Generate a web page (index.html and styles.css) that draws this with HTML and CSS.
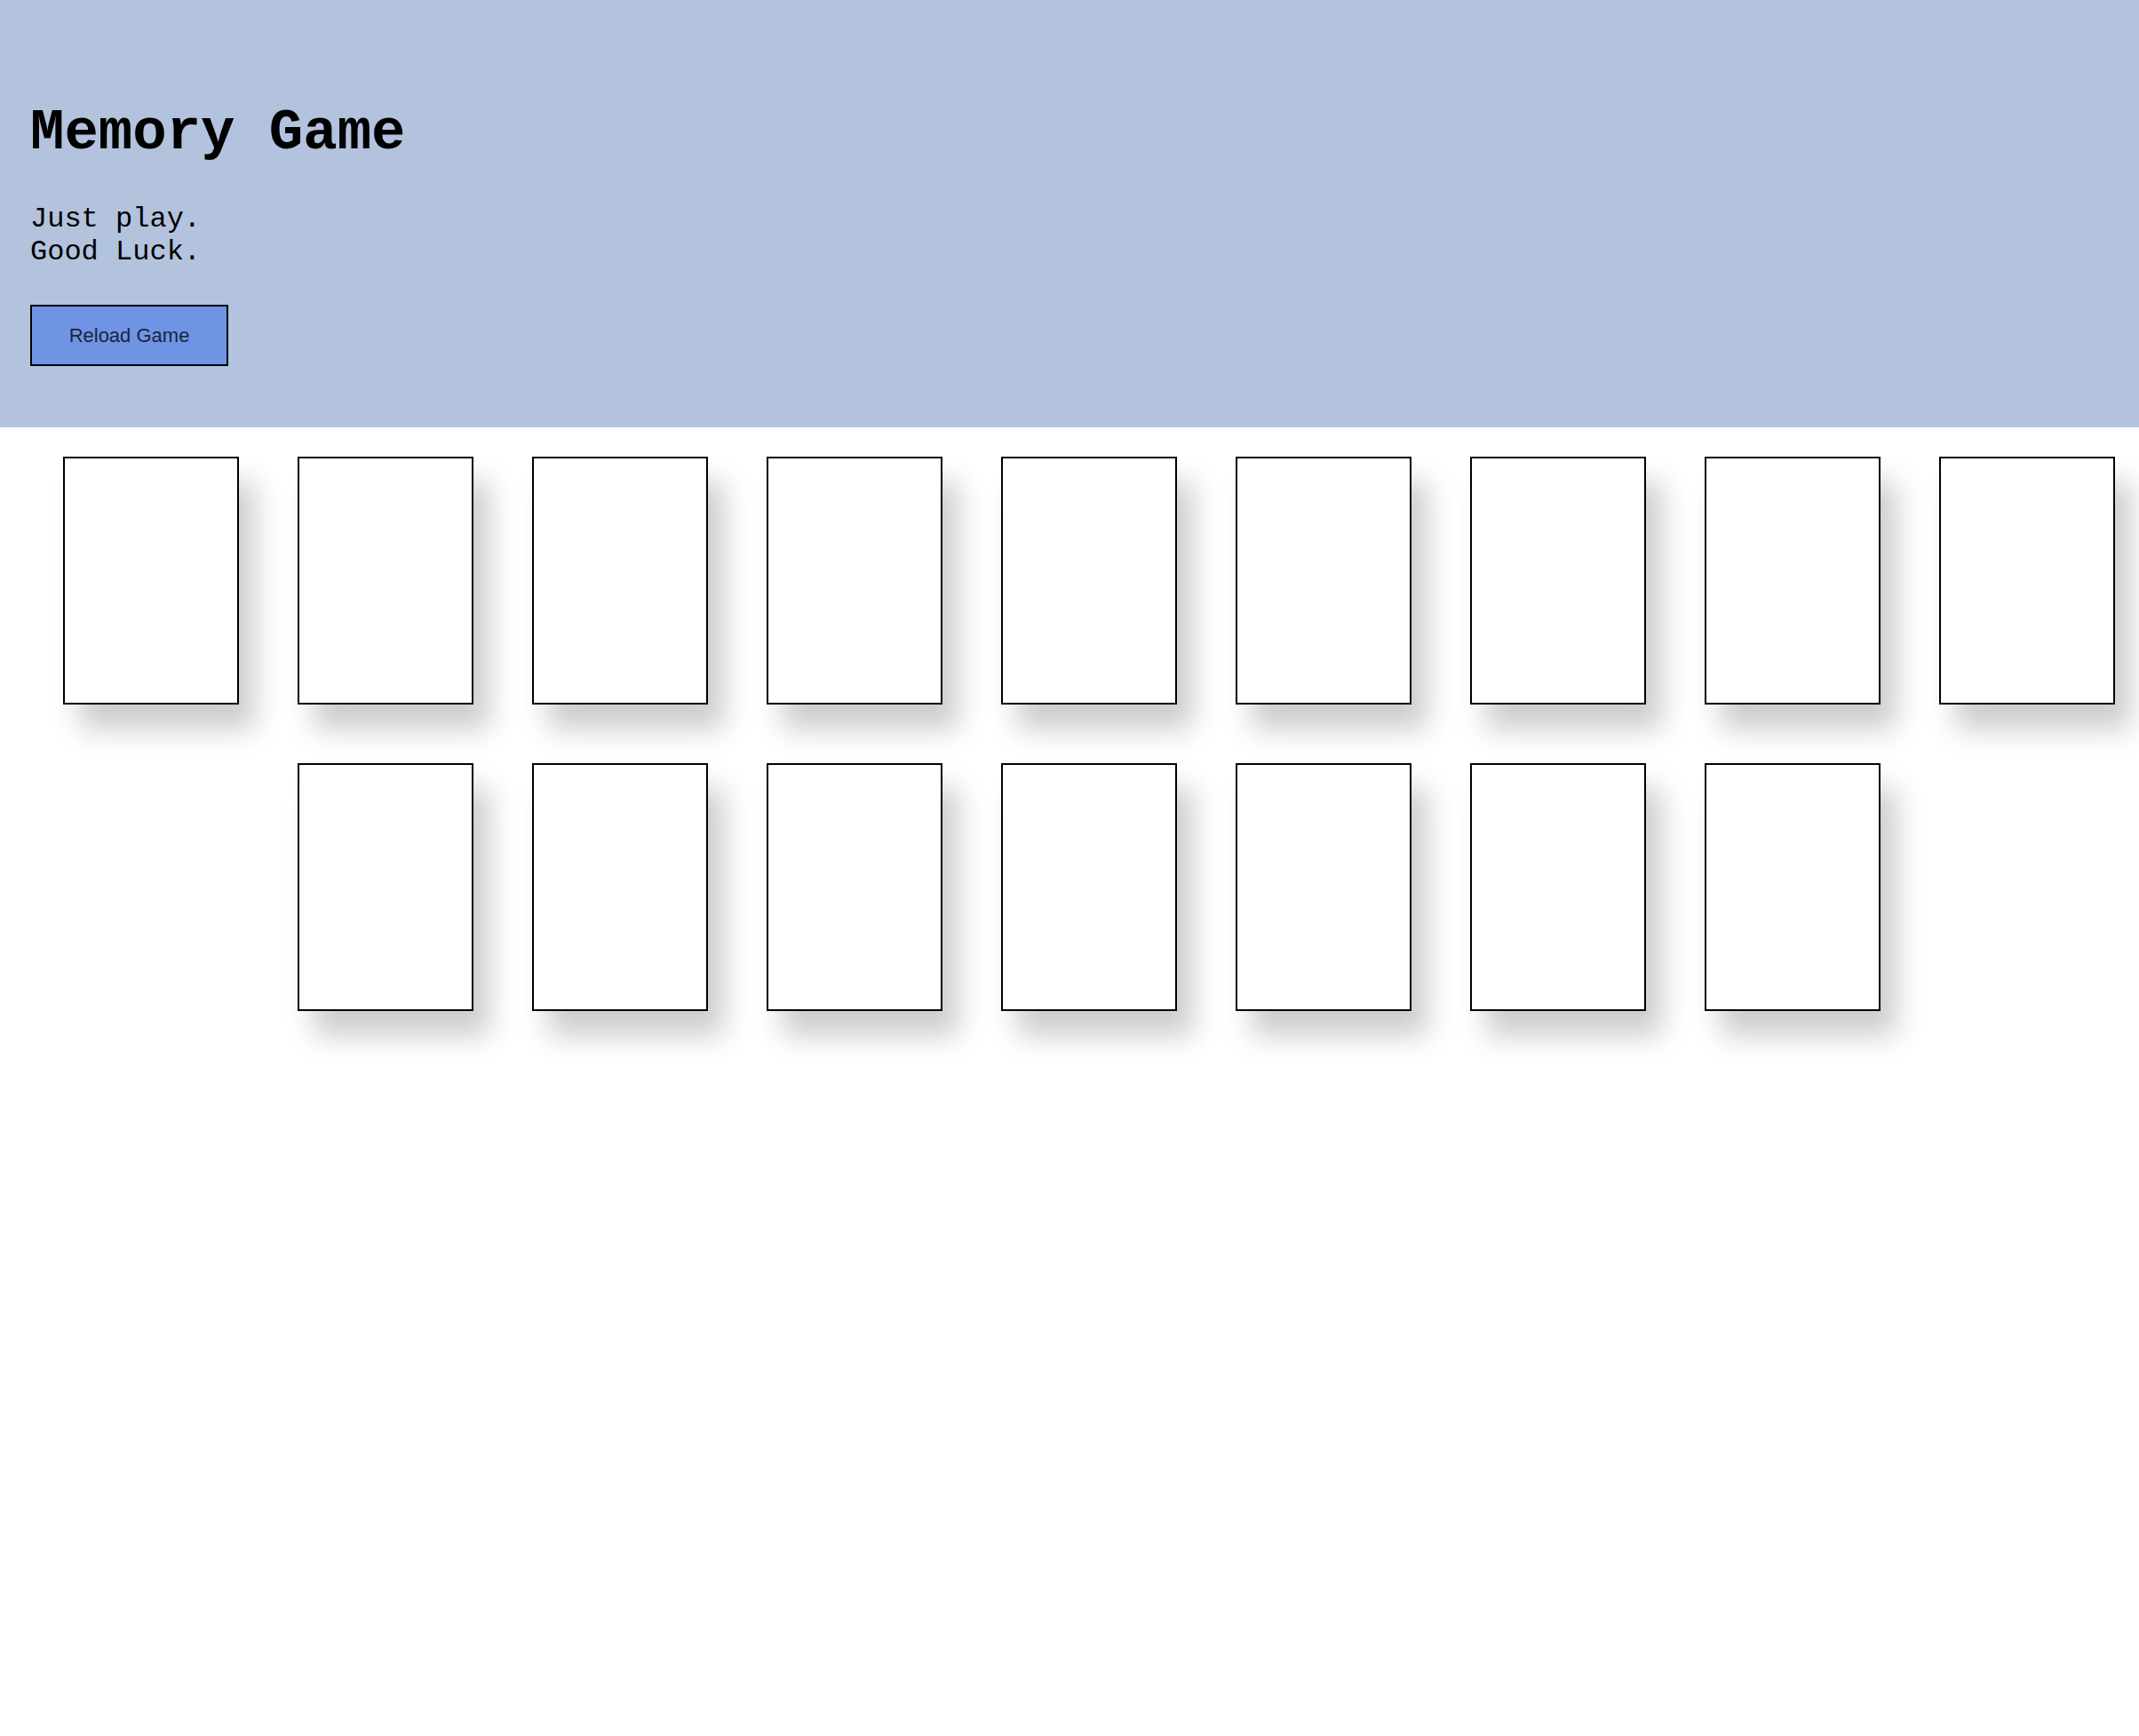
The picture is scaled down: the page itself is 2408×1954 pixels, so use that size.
FILE: index.html
```html
<!DOCTYPE html>
<html lang="en">
<head>
<meta charset="utf-8">
<title>Memory Game</title>
<link rel="stylesheet" href="styles.css">
</head>
<body>
<header class="hero">
  <h1 class="hero-title">Memory Game</h1>
  <p class="hero-text">Just play.<br>Good Luck.</p>
  <button class="reload-btn" type="button">Reload Game</button>
</header>
<main class="board">
  <div class="card"></div>
  <div class="card"></div>
  <div class="card"></div>
  <div class="card"></div>
  <div class="card"></div>
  <div class="card"></div>
  <div class="card"></div>
  <div class="card"></div>
  <div class="card"></div>
  <div class="card"></div>
  <div class="card"></div>
  <div class="card"></div>
  <div class="card"></div>
  <div class="card"></div>
  <div class="card"></div>
  <div class="card"></div>
</main>
</body>
</html>
```
FILE: styles.css
```css
html, body {
  margin: 0;
  padding: 0;
  background: #ffffff;
}

body {
  min-height: 100vh;
  font-family: "Courier New", "Liberation Mono", monospace;
  color: #000;
}

.hero {
  background: #b3c3dd;
  padding: 114px 34px 69px;
}

.hero-title {
  margin: 0;
  font-size: 64px;
  font-weight: bold;
  line-height: normal;
}

.hero-text {
  margin: 42px 0 0 0;
  font-size: 32px;
  line-height: normal;
}

.reload-btn {
  display: block;
  box-sizing: border-box;
  margin-top: 41px;
  width: 223px;
  height: 69px;
  padding: 0;
  background: #6f94e4;
  border: 2px solid #000;
  border-radius: 0;
  font-family: "Liberation Sans", Arial, sans-serif;
  font-size: 22px;
  color: #1a2440;
  cursor: pointer;
}

.board {
  display: flex;
  flex-wrap: wrap;
  justify-content: center;
  gap: 66px;
  padding: 33px 0 120px 43px;
}

.card {
  box-sizing: border-box;
  width: 198px;
  height: 279px;
  background: #fff;
  border: 2px solid #000;
  box-shadow: 18px 28px 30px rgba(0, 0, 0, 0.2);
}
```
